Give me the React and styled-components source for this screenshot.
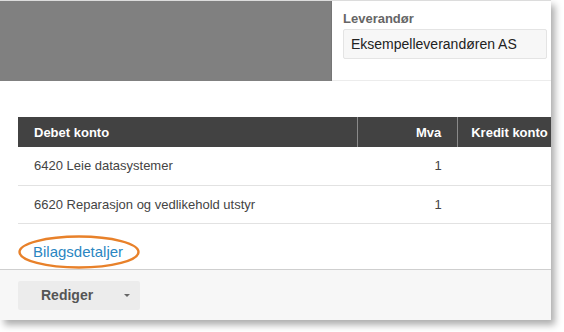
import React from "react";
import styled, { createGlobalStyle } from "styled-components";

const GlobalStyle = createGlobalStyle`
  html, body {
    margin: 0;
    padding: 0;
    background: #ffffff;
    font-family: "Liberation Sans", Arial, sans-serif;
  }
`;

const rows = [
  { debet: "6420 Leie datasystemer", mva: "1" },
  { debet: "6620 Reparasjon og vedlikehold utstyr", mva: "1" },
];

const App = () => {
  return (
    <Page>
      <GlobalStyle />
      <Card>
        <Top>
          <Redacted />
          <SupplierPanel>
            <Label>Leverandør</Label>
            <Field>Eksempelleverandøren AS</Field>
          </SupplierPanel>
        </Top>

        <TableWrap>
          <Table>
            <thead>
              <tr>
                <Th $width={339}>Debet konto</Th>
                <Th $width={100} $align="right">
                  Mva
                </Th>
                <Th $width={160}>Kredit konto</Th>
              </tr>
            </thead>
            <tbody>
              {rows.map((row, i) => (
                <tr key={i}>
                  <Td>{row.debet}</Td>
                  <Td $align="right">{row.mva}</Td>
                  <Td />
                </tr>
              ))}
            </tbody>
          </Table>
        </TableWrap>

        <LinkRow>
          <Highlight>
            <DetailsLink href="#">Bilagsdetaljer</DetailsLink>
            <Ring viewBox="0 0 122 34" aria-hidden="true">
              <ellipse
                cx="61"
                cy="17"
                rx="59.5"
                ry="15.5"
                fill="none"
                stroke="#e8812a"
                strokeWidth="2.4"
              />
            </Ring>
          </Highlight>
        </LinkRow>

        <Footer>
          <EditButton>
            Rediger
            <Caret />
          </EditButton>
        </Footer>
      </Card>
    </Page>
  );
};

const Page = styled.div`
  width: 564px;
  height: 332px;
  box-sizing: border-box;
  overflow: hidden;
`;

const Card = styled.div`
  width: 551px;
  height: 320px;
  box-sizing: border-box;
  border-top: 1px solid #dcdcdc;
  background: #ffffff;
  box-shadow: 4px 5px 7px rgba(0, 0, 0, 0.32);
  overflow: hidden;
  display: flex;
  flex-direction: column;
`;

const Top = styled.div`
  display: flex;
  height: 80px;
`;

const Redacted = styled.div`
  width: 331px;
  background: #808080;
  border-right: 1px solid #767676;
`;

const SupplierPanel = styled.div`
  flex: 1;
  padding: 10px 4px 0 11px;
  border-bottom: 1px solid #ececec;
`;

const Label = styled.div`
  font-size: 13px;
  font-weight: bold;
  color: #666666;
  line-height: 16px;
  margin-bottom: 2px;
`;

const Field = styled.div`
  height: 30px;
  box-sizing: border-box;
  border: 1px solid #e4e4e4;
  border-radius: 2px;
  background: #f7f7f7;
  padding: 0 7px;
  display: flex;
  align-items: center;
  font-size: 14px;
  color: #222222;
`;

const TableWrap = styled.div`
  margin: 36px 0 0 18px;
`;

const Table = styled.table`
  width: 600px;
  border-collapse: collapse;
  table-layout: fixed;
`;

const Th = styled.th`
  width: ${(p) => p.$width}px;
  height: 30px;
  box-sizing: border-box;
  background: #424242;
  color: #ffffff;
  font-size: 13px;
  font-weight: bold;
  text-align: ${(p) => p.$align || "left"};
  padding: 0 16px;
  border-left: 1px solid #8a8a8a;
  white-space: nowrap;

  &:first-child {
    border-left: none;
  }
  &:last-child {
    padding-left: 13px;
  }
`;

const Td = styled.td`
  height: 38px;
  box-sizing: border-box;
  font-size: 13px;
  color: #444444;
  text-align: ${(p) => p.$align || "left"};
  padding: 0 16px;
  border-bottom: 1px solid #e2e2e2;
  white-space: nowrap;
`;

const LinkRow = styled.div`
  padding: 11px 0 0 18px;
  height: 45px;
  box-sizing: border-box;
`;

const Highlight = styled.div`
  position: relative;
  width: 122px;
  height: 34px;
  display: flex;
  align-items: center;
  padding-left: 15px;
  box-sizing: border-box;
`;

const DetailsLink = styled.a`
  font-size: 15px;
  color: #2a86c2;
  text-decoration: none;
`;

const Ring = styled.svg`
  position: absolute;
  left: 0;
  top: 0;
  width: 122px;
  height: 34px;
  pointer-events: none;
`;

const Footer = styled.div`
  flex: 1;
  background: #f7f7f7;
  border-top: 1px solid #cfcfcf;
  padding: 11px 0 0 18px;
`;

const EditButton = styled.button`
  width: 122px;
  height: 29px;
  border: none;
  border-radius: 2px;
  background: #ececec;
  display: flex;
  align-items: center;
  padding: 0 0 0 23px;
  font-family: "Liberation Sans", Arial, sans-serif;
  font-size: 14px;
  font-weight: bold;
  color: #555555;
  cursor: pointer;
`;

const Caret = styled.span`
  margin-left: 31px;
  width: 0;
  height: 0;
  border-left: 3px solid transparent;
  border-right: 3px solid transparent;
  border-top: 3px solid #666666;
`;

export default App;
